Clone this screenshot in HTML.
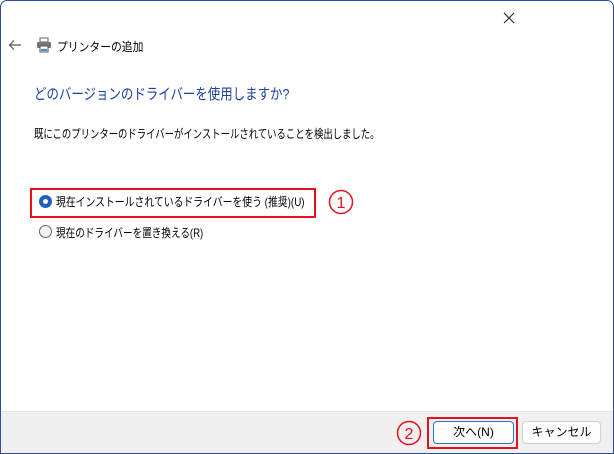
<!DOCTYPE html>
<html><head><meta charset="utf-8"><style>
*{margin:0;padding:0;box-sizing:border-box}
body{width:614px;height:454px;background:#fff;font-family:"Liberation Sans","Noto Sans CJK JP",sans-serif;position:relative;overflow:hidden;color:#000}
.frame{position:absolute;left:0;top:0;width:614px;height:454px;border:1px solid #2b4f9a;border-radius:7px 7px 0 0}
.abs{position:absolute;white-space:nowrap}
.sq{transform-origin:0 0}
.footer{position:absolute;left:1px;right:1px;top:411px;bottom:1px;background:#f0f0f0;border-top:1px solid #e3e3e3}
.btn{position:absolute;height:23px;border:1px solid #d0d0d0;border-radius:4px;background:#fdfdfd;font-size:12px;text-align:center;line-height:21px}
.radio{position:absolute;width:13px;height:13px;border-radius:50%}
</style></head><body>
<div class="frame"></div>
<svg class="abs" style="left:503px;top:12px" width="12" height="12" viewBox="0 0 12 12"><path d="M1 1L11 11M11 1L1 11" stroke="#222" stroke-width="1.1"/></svg>
<svg class="abs" style="left:8px;top:38px" width="14" height="14" viewBox="0 0 14 14"><path d="M13 7H2M6 2.5L1.5 7 6 11.5" stroke="#555" stroke-width="1.2" fill="none"/></svg>
<svg class="abs" style="left:36px;top:37px" width="16" height="16" viewBox="0 0 16 16"><rect x="4" y="1" width="8" height="4" fill="#fff" stroke="#666"/><rect x="1" y="5" width="14" height="6" rx="1" fill="#777"/><rect x="4" y="9" width="8" height="6" fill="#fff" stroke="#555"/><rect x="5" y="12" width="6" height="2" fill="#3a8fd6"/></svg>
<div class="abs sq" style="left:57px;top:38px;font-size:12px;transform:scaleX(0.9)">プリンターの追加</div>
<div class="abs sq" style="left:34px;top:83px;font-size:15px;color:#1a3f9e;transform:scaleX(0.83)">どのバージョンのドライバーを使用しますか?</div>
<div class="abs sq" style="left:34px;top:125px;font-size:12px;transform:scaleX(0.78)">既にこのプリンターのドライバーがインストールされていることを検出しました。</div>
<div class="abs" style="left:30px;top:188px;width:286px;height:30px;border:2px solid #e8101a"></div>
<div class="radio" style="left:39px;top:195px;background:#1e5fbf"><div style="position:absolute;left:4px;top:4px;width:5px;height:5px;border-radius:50%;background:#fff"></div></div>
<div class="abs sq" style="left:56px;top:193px;font-size:12px;transform:scaleX(0.82)">現在インストールされているドライバーを使う (推奨)(U)</div>
<svg class="abs" style="left:328px;top:189px" width="26" height="26" viewBox="0 0 26 26"><circle cx="13" cy="13" r="11.5" fill="none" stroke="#e8101a" stroke-width="1.5"/><text x="13" y="19" font-size="16" text-anchor="middle" fill="#e8101a" font-family="Liberation Sans">1</text></svg>
<div class="radio" style="left:39px;top:225px;border:1px solid #666;background:#f4f4f4"></div>
<div class="abs sq" style="left:56px;top:224px;font-size:12px;transform:scaleX(0.8)">現在のドライバーを置き換える(R)</div>
<div class="footer"></div>
<svg class="abs" style="left:396px;top:420px" width="26" height="26" viewBox="0 0 26 26"><circle cx="13" cy="13" r="11.5" fill="none" stroke="#e8101a" stroke-width="1.5"/><text x="13" y="19" font-size="16" text-anchor="middle" fill="#e8101a" font-family="Liberation Sans">2</text></svg>
<div class="abs" style="left:427px;top:417px;width:91px;height:32px;border:2px solid #e8101a"></div>
<div class="btn" style="left:433px;top:421px;width:81px;border:1px solid #2c73c8">次へ(N)</div>
<div class="btn" style="left:522px;top:421px;width:79px">キャンセル</div>
</body></html>
